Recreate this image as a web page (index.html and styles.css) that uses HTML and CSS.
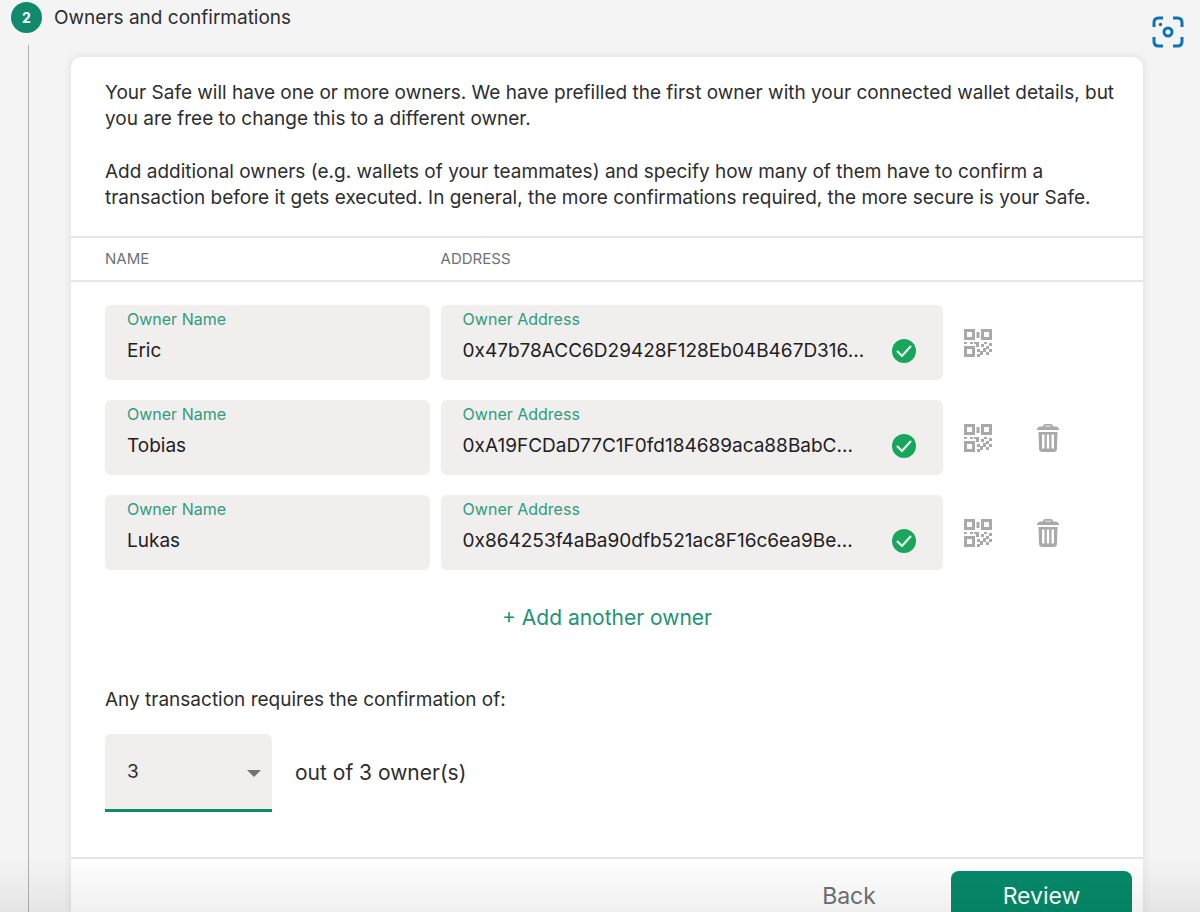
FILE: index.html
```html
<!DOCTYPE html>
<html lang="en">
<head>
    <meta charset="UTF-8">
    <meta name="viewport" content="width=device-width, initial-scale=1.0">
    <title>Create Safe - Owners and confirmations</title>
    <link rel="stylesheet" href="styles.css">
</head>
<body>
    <!-- shared icons -->
    <svg class="sprite" aria-hidden="true">
        <symbol id="icon-check" viewBox="0 0 24 24">
            <circle cx="12" cy="12" r="12" fill="#18a65c"/>
            <path d="M5 12l5 5 9-10" fill="none" stroke="#e9f8ee" stroke-width="2.200"/>
        </symbol>
        <symbol id="icon-qr" viewBox="0 0 28 28">
            <path fill-rule="evenodd" d="M0 0h11v11H0zM3 3v5h5V3zM17 0h11v11H17zM20 3v5h5V3zM0 17h11v11H0zM3 20v5h5v-5z"/>
            <path d="M12.500 3h3v6h-3zM0 13h3v2H0zM6 13h3v2H6zM10 13h5v5h-3v-3h-2zM20 13h3v2h-3zM25 14h3v3h-3zM17 15h3v3h-3zM22 17h3v3h-3zM13 20h3v3h-3zM19 19h3v4h-3v3h-3v-4h3zM25 20h3v3h-3zM22 23h3v3h-3zM13 25h3v3h-3z"/>
        </symbol>
        <symbol id="icon-trash" viewBox="0 0 22 28">
            <path fill-rule="evenodd" d="M6 2.500Q6 0 8.500 0h5Q16 0 16 2.500h3.500L22 4.500V6H0V4.500l2.500-2zM8 2.500h6V1.800H8z"/>
            <path fill-rule="evenodd" d="M1.500 8h19L20 24.500Q19.800 28 16.500 28h-11Q2.200 28 2 24.500zM5 10.500v14h2.500v-14zM9.800 10.500v14h2.400v-14zM14.500 10.500v14H17v-14z"/>
        </symbol>
    </svg>

    <button class="lens" aria-label="Visual search">
        <svg viewBox="0 0 32 32" width="32" height="32" fill="none" stroke="#0b74b8" stroke-width="3">
            <path d="M2 11V6.500Q2 2 6.500 2H11M21 2h4.500Q30 2 30 6.500V11M30 21v4.500Q30 30 25.500 30H21M11 30H6.500Q2 30 2 25.500V21"/>
            <circle cx="16" cy="16" r="4"/>
            <circle cx="8.500" cy="8.500" r="1.700" fill="#3d5c78" stroke="none"/>
        </svg>
    </button>

    <main class="step">
        <header class="step-header">
            <span class="step-number">2</span>
            <h1>Owners and confirmations</h1>
        </header>
        <div class="step-body">
            <form class="card">
                <div class="intro">
                    <p>Your Safe will have one or more owners. We have prefilled the first owner with your connected wallet details, but you are free to change this to a different owner.</p>
                    <p>Add additional owners (e.g. wallets of your teammates) and specify how many of them have to confirm a transaction before it gets executed. In general, the more confirmations required, the more secure is your Safe.</p>
                </div>

                <div class="owner-grid owner-head">
                    <span>NAME</span>
                    <span>ADDRESS</span>
                </div>

                <div class="owners">
                    <div class="owner-grid">
                        <div class="field">
                            <label for="name-1">Owner Name</label>
                            <input id="name-1" type="text" value="Eric">
                        </div>
                        <div class="field field-address">
                            <label for="address-1">Owner Address</label>
                            <input id="address-1" type="text" value="0x47b78ACC6D29428F128Eb04B467D316...">
                            <svg class="check"><use href="#icon-check"/></svg>
                        </div>
                        <button type="button" class="icon-button" aria-label="Scan QR code"><svg class="qr"><use href="#icon-qr"/></svg></button>
                    </div>
                    <div class="owner-grid">
                        <div class="field">
                            <label for="name-2">Owner Name</label>
                            <input id="name-2" type="text" value="Tobias">
                        </div>
                        <div class="field field-address">
                            <label for="address-2">Owner Address</label>
                            <input id="address-2" type="text" value="0xA19FCDaD77C1F0fd184689aca88BabC...">
                            <svg class="check"><use href="#icon-check"/></svg>
                        </div>
                        <button type="button" class="icon-button" aria-label="Scan QR code"><svg class="qr"><use href="#icon-qr"/></svg></button>
                        <button type="button" class="icon-button" aria-label="Remove owner"><svg class="trash"><use href="#icon-trash"/></svg></button>
                    </div>
                    <div class="owner-grid">
                        <div class="field">
                            <label for="name-3">Owner Name</label>
                            <input id="name-3" type="text" value="Lukas">
                        </div>
                        <div class="field field-address">
                            <label for="address-3">Owner Address</label>
                            <input id="address-3" type="text" value="0x864253f4aBa90dfb521ac8F16c6ea9Be...">
                            <svg class="check"><use href="#icon-check"/></svg>
                        </div>
                        <button type="button" class="icon-button" aria-label="Scan QR code"><svg class="qr"><use href="#icon-qr"/></svg></button>
                        <button type="button" class="icon-button" aria-label="Remove owner"><svg class="trash"><use href="#icon-trash"/></svg></button>
                    </div>
                </div>

                <button type="button" class="add-owner">+ Add another owner</button>

                <div class="threshold">
                    <label for="threshold">Any transaction requires the confirmation of:</label>
                    <div class="threshold-row">
                        <div class="select">
                            <select id="threshold">
                                <option>1</option>
                                <option>2</option>
                                <option selected>3</option>
                            </select>
                        </div>
                        <span>out of 3 owner(s)</span>
                    </div>
                </div>

                <footer class="actions">
                    <button type="button" class="back">Back</button>
                    <button type="submit" class="review">Review</button>
                </footer>
            </form>
        </div>
    </main>
</body>
</html>
```
FILE: styles.css
```css
* {
    box-sizing: border-box;
}
body {
    margin: 0;
    background-color: #f5f4f5;
    color: #2c2e30;
    font-family: Inter, "Liberation Sans", sans-serif;
    font-size: 19px;
    line-height: 26px;
}
/* page fades out towards the bottom of the window */
body::after {
    content: "";
    position: fixed;
    left: 0;
    right: 0;
    bottom: 0;
    height: 56px;
    background: linear-gradient(rgba(0, 0, 0, 0), rgba(0, 0, 0, 0.06));
    pointer-events: none;
}
button,
input,
select {
    font: inherit;
    color: inherit;
    border: none;
    padding: 0;
    background: none;
}
button {
    cursor: pointer;
}
.sprite {
    position: absolute;
    width: 0;
    height: 0;
}
.lens {
    position: absolute;
    top: 16px;
    right: 16px;
    width: 32px;
    height: 32px;
}
.lens svg {
    display: block;
}
.step {
    padding-top: 2px;
}
.step-header {
    display: flex;
    align-items: center;
    gap: 12px;
    height: 31px;
    padding-left: 11px;
}
.step-number {
    width: 31px;
    height: 31px;
    border-radius: 50%;
    background-color: #0f8b6b;
    color: #fff;
    font-size: 14px;
    font-weight: 700;
    line-height: 31px;
    text-align: center;
}
.step-header h1 {
    margin: 0;
    font-size: 19px;
    font-weight: 400;
}
.step-body {
    margin: 12px 0 0 28px;
    padding: 12px 57px 0 42px;
    border-left: 1px solid #b0afb0;
}
.card {
    background-color: #fff;
    border-radius: 10px;
    box-shadow: 0 0 8px rgba(40, 54, 61, 0.12);
}
.intro {
    padding: 23px 28px 25px 34px;
}
.intro p {
    margin: 0;
}
.intro p + p {
    margin-top: 27px;
}
.owner-grid {
    display: grid;
    grid-template-columns: 325fr 503fr 48px 70px;
    column-gap: 11px;
    padding: 0 60px 0 34px;
}
.owner-head {
    padding-top: 8px;
    padding-bottom: 8px;
    border-top: 2px solid #e4e5e6;
    border-bottom: 2px solid #e4e5e6;
    color: #6f7174;
    font-size: 15px;
}
.owners {
    display: flex;
    flex-direction: column;
    gap: 20px;
    padding-top: 23px;
}
.field {
    position: relative;
    height: 75px;
    padding: 3px 22px 0;
    border-radius: 6px;
    background-color: #f0efee;
}
.field label {
    display: block;
    color: #2f9c7e;
    font-size: 16px;
    line-height: 22px;
}
.field input {
    display: block;
    width: 100%;
    height: 40px;
    color: #1f2022;
    outline: none;
}
.field-address {
    padding-right: 60px;
}
.check {
    position: absolute;
    right: 27px;
    bottom: 17px;
    width: 24px;
    height: 24px;
}
.icon-button {
    height: 75px;
    color: #a9a9a9;
}
.icon-button svg {
    display: block;
    margin: 0 auto;
    fill: currentColor;
}
.qr {
    width: 28px;
    height: 28px;
}
.trash {
    width: 22px;
    height: 28px;
}
.add-owner {
    display: block;
    margin: 35px auto 0;
    color: #1d9475;
    font-size: 21px;
}
.threshold {
    padding: 56px 34px 45px;
}
.threshold > label {
    display: block;
}
.threshold-row {
    display: flex;
    align-items: center;
    gap: 23px;
    margin-top: 21px;
    font-size: 21px;
}
.select {
    position: relative;
    width: 167px;
}
.select::after {
    content: "";
    position: absolute;
    top: 36px;
    right: 11px;
    border: 7px solid transparent;
    border-top-color: #737373;
    border-bottom: none;
    pointer-events: none;
}
.select select {
    display: block;
    appearance: none;
    width: 100%;
    height: 78px;
    padding: 0 22px;
    border-bottom: 3px solid #128a6a;
    border-radius: 6px 6px 0 0;
    background-color: #f0efee;
    font-size: 19px;
}
.actions {
    display: flex;
    justify-content: flex-end;
    gap: 24px;
    padding: 12px 11px;
    border-top: 2px solid #e4e5e6;
    font-size: 23px;
}
.back {
    width: 156px;
    color: #6f7174;
}
.review {
    width: 181px;
    height: 50px;
    border-radius: 8px;
    background-color: #058a6a;
    color: #fff;
}
```
